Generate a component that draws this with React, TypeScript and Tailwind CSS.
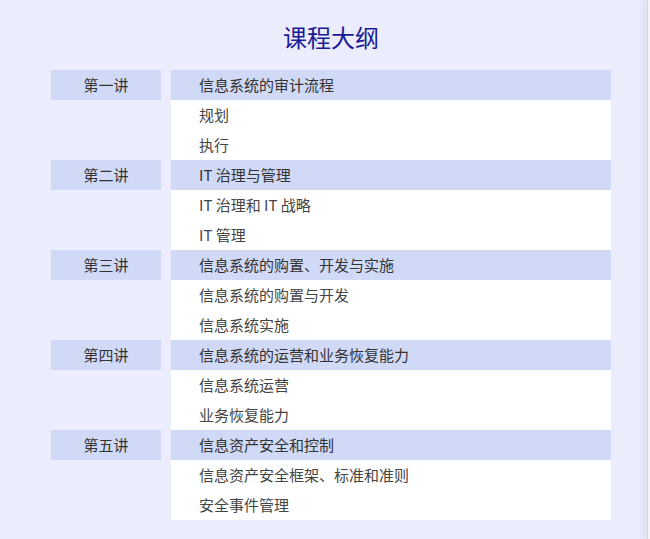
import React from "react";

const sections = [
  { label: "第一讲", title: "信息系统的审计流程", items: ["规划", "执行"] },
  { label: "第二讲", title: "IT 治理与管理", items: ["IT 治理和 IT 战略", "IT 管理"] },
  { label: "第三讲", title: "信息系统的购置、开发与实施", items: ["信息系统的购置与开发", "信息系统实施"] },
  { label: "第四讲", title: "信息系统的运营和业务恢复能力", items: ["信息系统运营", "业务恢复能力"] },
  { label: "第五讲", title: "信息资产安全和控制", items: ["信息资产安全框架、标准和准则", "安全事件管理"] },
];

export default function App() {
  return (
    <div
      className="flex w-[650px] h-[539px] bg-[#ebecfc] overflow-hidden"
      style={{ fontFamily: '"Noto Sans CJK SC", "Noto Sans", sans-serif' }}
    >
      <div className="flex-1">
        <div className="ml-[51px] w-[560px]">
          <h1 className="pt-[20px] mb-[16px] text-center text-[24px] leading-[34px] text-[#1a1a96]">
            课程大纲
          </h1>
          <div className="flex flex-col">
            {sections.map((s) => (
              <div key={s.label} className="flex gap-[10px]">
                <div className="w-[110px] shrink-0">
                  <div className="h-[30px] bg-[#d0d9f6] text-center text-[15px] leading-[30px] text-[#333]">
                    {s.label}
                  </div>
                </div>
                <div className="w-[440px] flex flex-col">
                  <div className="h-[30px] bg-[#d0d9f6] pl-[28px] text-[15px] leading-[30px] text-[#333]">
                    {s.title}
                  </div>
                  {s.items.map((it) => (
                    <div
                      key={it}
                      className="h-[30px] bg-white pl-[28px] text-[15px] leading-[30px] text-[#444]"
                    >
                      {it}
                    </div>
                  ))}
                </div>
              </div>
            ))}
          </div>
        </div>
      </div>
      <div className="w-[3px] h-full bg-[#f4f4f8] border-l border-[#d4d4dc] shadow-[-4px_0_5px_rgba(120,120,150,0.18)]" />
    </div>
  );
}
